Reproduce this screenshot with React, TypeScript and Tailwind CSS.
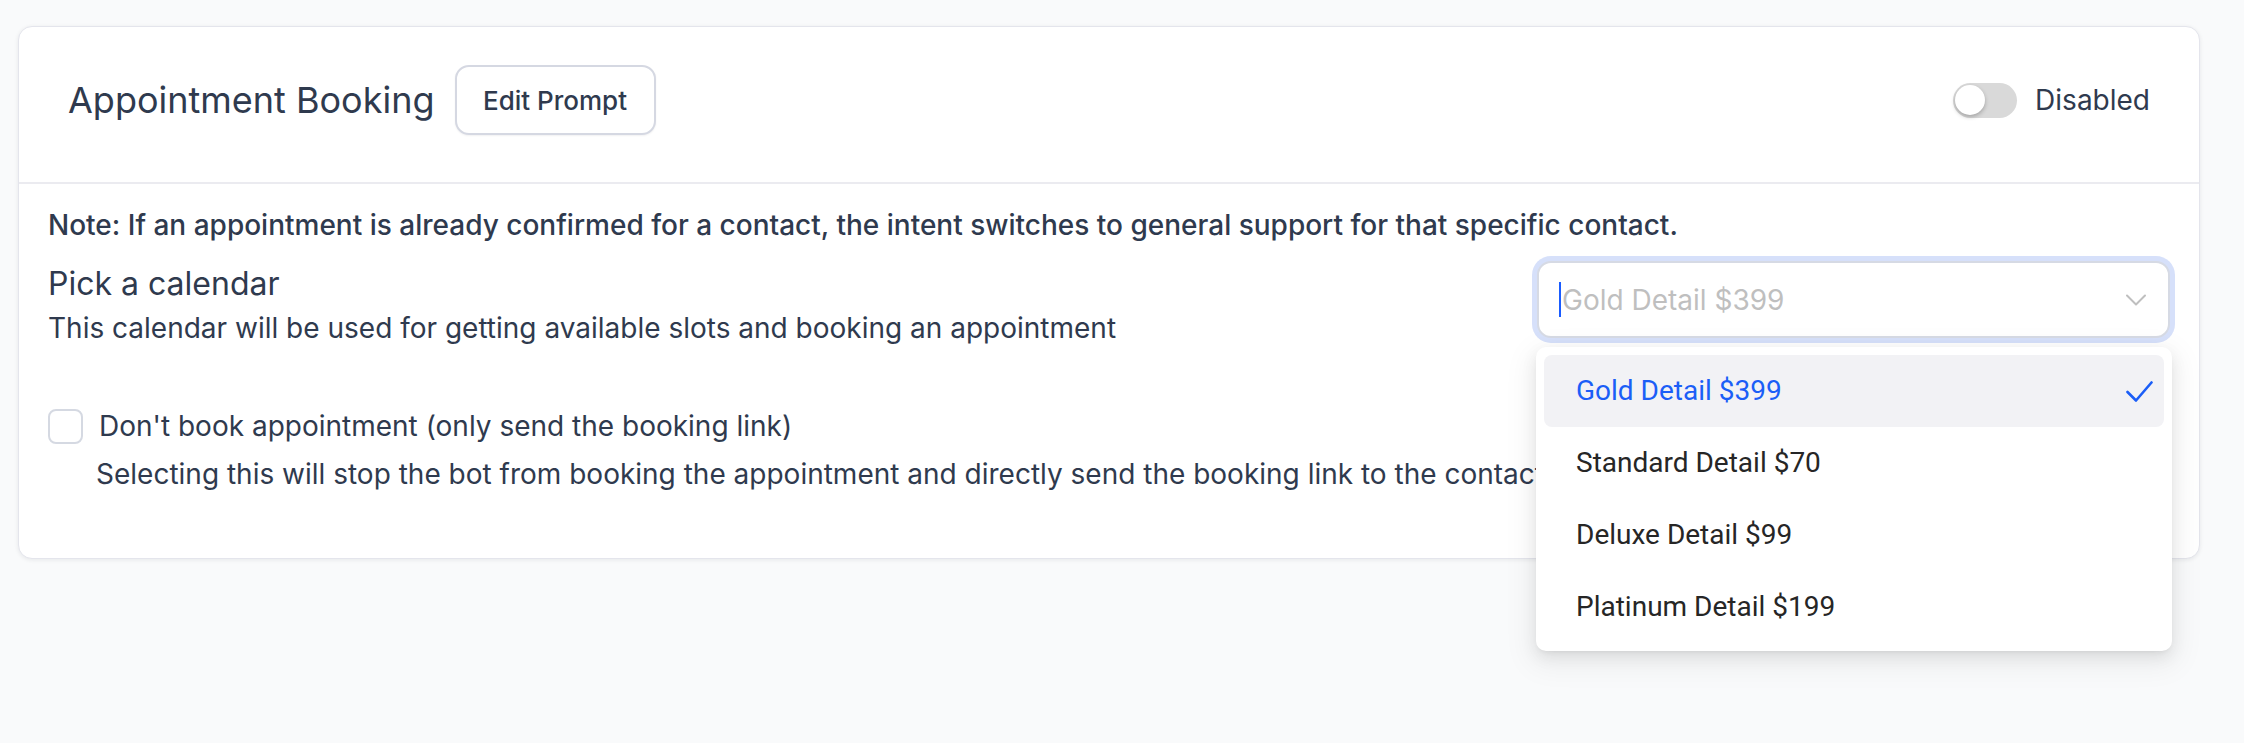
export default function App() {
  const items = ["Gold Detail $399", "Standard Detail $70", "Deluxe Detail $99", "Platinum Detail $199"];
  return (
    <div className="min-h-screen bg-[#f9fafb] pt-[26px] pl-[18px] pr-[44px] [font-family:Inter,'Noto_Sans',sans-serif]">
      <div className="relative rounded-[14px] border border-[#e4e5ec] bg-white shadow-[0_1px_4px_rgba(16,24,40,0.08)]">
        <div className="flex h-[157px] items-center justify-between border-b-2 border-[#ebebf0] pb-[9px] pl-[49px] pr-[49px]">
          <div className="flex items-center gap-[20px]">
            <h2 className="text-[36px] leading-none text-[#2f3a4e]">Appointment Booking</h2>
            <button className="h-[70px] w-[201px] rounded-[14px] border-2 border-[#d5d8e2] bg-white text-[26px] font-medium text-[#2f3a4e] shadow-[0_1px_2px_rgba(16,24,40,0.06)]">
              Edit Prompt
            </button>
          </div>
          <div className="flex items-center gap-[18px]">
            <div className="relative h-[35px] w-[64px] rounded-full bg-[#d9d9d9]">
              <div className="absolute left-[2px] top-[2.5px] h-[30px] w-[30px] rounded-full bg-white shadow-[0_2px_4px_rgba(0,0,0,0.25)]" />
            </div>
            <span className="text-[28px] leading-none text-[#2f3a4e]">Disabled</span>
          </div>
        </div>

        <div className="px-[29px] pt-[25px] pb-[68px]">
          <p className="text-[28px] font-medium leading-[32px] text-[#2f3a4e]">
            Note: If an appointment is already confirmed for a contact, the intent switches to general support for that specific contact.
          </p>

          <div className="mt-[20px] flex items-start justify-between">
            <div className="pt-[5px]">
              <div className="text-[32px] leading-[36px] text-[#2f3a4e]">Pick a calendar</div>
              <div className="mt-[10px] text-[28px] leading-[32px] text-[#2f3a4e]">
                This calendar will be used for getting available slots and booking an appointment
              </div>
            </div>

            <div className="relative w-[633px]">
              <div className="flex h-[77px] items-center justify-between rounded-[14px] border-2 border-[#d6dae4] bg-white pl-[20px] pr-[22px] shadow-[0_0_0_5px_#d6e0fa]">
                <div className="flex items-center">
                  <span className="h-[35px] w-[2px] bg-[#1a5cff]" />
                  <span className="ml-[1px] text-[28px] leading-none text-[#bfbfbf]">Gold Detail $399</span>
                </div>
                <svg width="20" height="12" viewBox="0 0 20 12" fill="none">
                  <polyline points="1,1.5 10,10.5 19,1.5" stroke="#bfbfbf" strokeWidth="2" strokeLinecap="round" strokeLinejoin="round" />
                </svg>
              </div>

              <div className="absolute left-[-1px] top-[calc(100%+9px)] z-10 w-[636px] rounded-[10px] bg-white p-[8px] shadow-[0_6px_16px_rgba(0,0,0,0.08),0_3px_6px_-4px_rgba(0,0,0,0.12),0_9px_28px_8px_rgba(0,0,0,0.05)] [font-family:Roboto,sans-serif]">
                {items.map((it, i) => (
                  <div
                    key={it}
                    className={
                      i === 0
                        ? "flex h-[72px] items-center justify-between rounded-[8px] bg-[#f2f2f5] pl-[32px] pr-[11px] text-[28px] text-[#1b5ef7]"
                        : "flex h-[72px] items-center justify-between rounded-[8px] pl-[32px] pr-[11px] text-[28px] text-[#262626]"
                    }
                  >
                    <span>{it}</span>
                    {i === 0 && (
                      <svg width="27" height="21" viewBox="0 0 27 21" fill="none">
                        <polyline points="1.5,11 10,19.5 25.5,1.5" stroke="#1b5ef7" strokeWidth="2.6" strokeLinecap="round" strokeLinejoin="round" />
                      </svg>
                    )}
                  </div>
                ))}
              </div>
            </div>
          </div>

          <div className="mt-[64px] flex items-center gap-[16px]">
            <span className="h-[35px] w-[35px] rounded-[8px] border-2 border-[#d5d9e2] bg-white" />
            <span className="text-[28px] leading-[36px] text-[#2f3a4e]">Don't book appointment (only send the booking link)</span>
          </div>
          <div className="mt-[14px] pl-[48px] text-[28px] leading-[32px] text-[#2f3a4e]">
            Selecting this will stop the bot from booking the appointment and directly send the booking link to the contact.
          </div>
        </div>
      </div>
    </div>
  );
}
